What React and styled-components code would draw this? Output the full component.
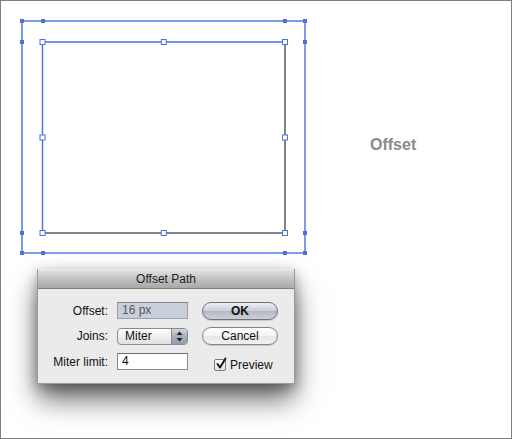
import React from "react";
import styled, { createGlobalStyle } from "styled-components";

const Global = createGlobalStyle`
  html, body { margin: 0; padding: 0; background: #fff; }
  body { font-family: "Liberation Sans", Arial, sans-serif; }
`;

const Frame = styled.div`
  width: 512px;
  height: 439px;
  box-sizing: border-box;
  border: 1px solid #808080;
  background: #fff;
  overflow: hidden;
`;

const TopRow = styled.div`
  display: flex;
  align-items: flex-start;
  height: 262px;
`;

const Artwork = styled.svg`
  display: block;
  flex: none;
`;

const SideLabel = styled.div`
  margin-left: 49px;
  margin-top: 135px;
  font-size: 16px;
  line-height: 18px;
  font-weight: bold;
  color: #8a8a8a;
`;

const Dialog = styled.div`
  margin-left: 36px;
  margin-top: 6px;
  width: 258px;
  background: #ebebeb;
  border: 1px solid #9a9a9a;
  border-top: none;
  box-sizing: border-box;
  box-shadow: 0 16px 26px -1px rgba(0, 0, 0, 0.6), 0 4px 12px rgba(0, 0, 0, 0.3);
`;

const TitleBar = styled.div`
  height: 20px;
  box-sizing: border-box;
  background: linear-gradient(#e2e2e2, #c2c2c2 50%, #a8a8a8);
  border-bottom: 1px solid #7e7e7e;
  border-top: 1px solid #ececec;
  display: flex;
  align-items: center;
  justify-content: center;
  font-size: 12px;
  color: #1e1e1e;
`;

const Body = styled.div`
  display: grid;
  grid-template-columns: 70px 71px 81px;
  grid-auto-rows: 17px;
  column-gap: 9px;
  row-gap: 8.5px;
  padding: 13px 0 13px 0;
  align-items: center;
`;

const Label = styled.div`
  text-align: right;
  font-size: 12px;
  color: #111;
`;

const Field = styled.div`
  height: 17px;
  box-sizing: border-box;
  border: 1px solid ${(p) => (p.$disabled ? "#9aa0aa" : "#8c8c8c")};
  border-top-color: ${(p) => (p.$disabled ? "#7f8590" : "#6c6c6c")};
  background: ${(p) => (p.$disabled ? "#c8cfdb" : "#fff")};
  color: ${(p) => (p.$disabled ? "#55585e" : "#111")};
  font-size: 12px;
  line-height: 15px;
  padding-left: 4px;
`;

const Popup = styled.div`
  height: 17px;
  box-sizing: border-box;
  border: 1px solid #8a8a8a;
  border-radius: 4px;
  display: flex;
  overflow: hidden;
  background: linear-gradient(#ffffff, #eeeeee 50%, #e0e0e0);
  font-size: 12px;
  color: #111;
`;

const PopupText = styled.div`
  flex: 1;
  line-height: 15px;
  padding-left: 7px;
`;

const PopupArrows = styled.div`
  width: 15px;
  border-left: 1px solid #8a8a8a;
  background: linear-gradient(#d2d8e2, #a6afbd 50%, #939dad);
  display: flex;
  align-items: center;
  justify-content: center;
`;

const Button = styled.div`
  margin-left: 5px;
  height: 18px;
  box-sizing: border-box;
  border-radius: 9px;
  border: 1px solid ${(p) => (p.$default ? "#6d737d" : "#858585")};
  background: ${(p) =>
    p.$default
      ? "linear-gradient(#eef0f4, #c9cdd5 50%, #b4b9c3 51%, #c9ced7)"
      : "linear-gradient(#ffffff, #f4f4f4 50%, #e6e6e6 51%, #f2f2f2)"};
  display: flex;
  align-items: center;
  justify-content: center;
  font-size: 12px;
  color: #111;
  font-weight: ${(p) => (p.$default ? "bold" : "normal")};
  box-shadow: 0 1px 1px rgba(0, 0, 0, 0.15);
`;

const Check = styled.label`
  margin-left: 17px;
  display: flex;
  align-items: center;
  gap: 4px;
  font-size: 12px;
  color: #111;
  padding-top: 6px;
`;

const Box = styled.span`
  width: 12px;
  height: 12px;
  box-sizing: border-box;
  border: 1px solid #7a7a7a;
  border-radius: 2px;
  background: linear-gradient(#ffffff, #e4e4e4);
  display: flex;
  align-items: center;
  justify-content: center;
  position: relative;
`;

const BLUE = "#4d70dd";

function Anchor({ x, y }) {
  return <rect x={x - 2} y={y - 2} width={4} height={4} fill={BLUE} />;
}

function Handle({ x, y }) {
  return (
    <rect x={x - 2.5} y={y - 2.5} width={5} height={5} fill="#fff" stroke={BLUE} strokeWidth={1} />
  );
}

function Drawing() {
  const L = 42.5, T = 42, R = 285, B = 233;
  const outer = [
    [22, 21], [43, 21], [285, 21], [305, 21],
    [22, 42], [305, 42], [22, 233], [305, 233],
    [22, 253], [43, 253], [285, 253], [305, 253],
  ];
  const mx = (L + R) / 2, my = (T + B) / 2;
  const handles = [
    [L, T], [mx, T], [R, T], [L, my], [R, my], [L, B], [mx, B], [R, B],
  ];
  return (
    <Artwork width="320" height="262" viewBox="1 1 320 262">
      <rect x={22} y={21} width={283} height={232} fill="none" stroke={BLUE} strokeWidth={1.4} />
      <line x1={R} y1={T} x2={R} y2={B} stroke="#4a4f5c" strokeWidth={1.4} />
      <line x1={L} y1={B} x2={R} y2={B} stroke="#555b6e" strokeWidth={1.4} />
      <line x1={L} y1={T} x2={R} y2={T} stroke={BLUE} strokeWidth={1.4} />
      <line x1={L} y1={T} x2={L} y2={B} stroke={BLUE} strokeWidth={1.4} />
      {outer.map(([x, y], i) => (
        <Anchor key={i} x={x} y={y} />
      ))}
      {handles.map(([x, y], i) => (
        <Handle key={i} x={x} y={y} />
      ))}
    </Artwork>
  );
}

export default function App() {
  return (
    <>
      <Global />
      <Frame>
        <TopRow>
          <Drawing />
          <SideLabel>Offset</SideLabel>
        </TopRow>
        <Dialog>
          <TitleBar>Offset Path</TitleBar>
          <Body>
            <Label>Offset:</Label>
            <Field $disabled>16 px</Field>
            <Button $default>OK</Button>

            <Label>Joins:</Label>
            <Popup>
              <PopupText>Miter</PopupText>
              <PopupArrows>
                <svg width="7" height="11" viewBox="0 0 7 11">
                  <path d="M3.5 0.5 L6.5 4 L0.5 4 Z" fill="#222" />
                  <path d="M3.5 10.5 L6.5 7 L0.5 7 Z" fill="#222" />
                </svg>
              </PopupArrows>
            </Popup>
            <Button>Cancel</Button>

            <Label>Miter limit:</Label>
            <Field>4</Field>
            <Check>
              <Box>
                <svg width="13" height="13" viewBox="0 0 13 13" style={{ position: "absolute", left: 0, top: -3 }}>
                  <path d="M2.5 7 L5 10.5 L10.5 1.5" fill="none" stroke="#1a1a1a" strokeWidth="2" strokeLinecap="round" strokeLinejoin="round" />
                </svg>
              </Box>
              Preview
            </Check>
          </Body>
        </Dialog>
      </Frame>
    </>
  );
}
